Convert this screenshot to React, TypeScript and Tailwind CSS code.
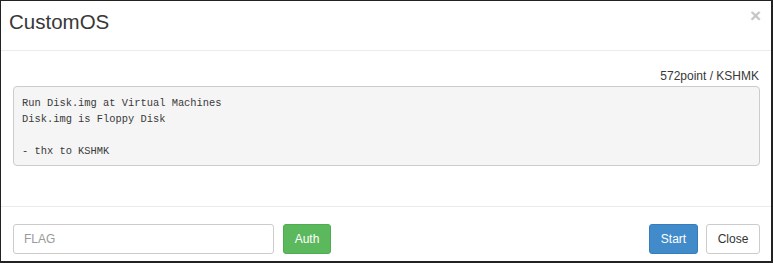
export default function App() {
  return (
    <div
      className="w-[773px] h-[263px] bg-white border-t border-l border-r-2 border-b-2 border-[#222] flex flex-col text-[#333]"
      style={{ fontFamily: '"Liberation Sans", Arial, sans-serif' }}
    >
      <div className="h-[50px] shrink-0 border-b border-[#ebebeb] flex justify-between items-start pl-[8px] pr-[10px]">
        <h4 className="text-[20.5px] leading-[28px] pt-[7px] text-[#383838]">CustomOS</h4>
        <span className="text-[19px] leading-[20px] font-bold text-[#c6c6c6] pt-[5px]">×</span>
      </div>

      <div className="flex-1 pl-[12px] pr-[11px] pt-[17px]">
        <div className="text-right text-[12px] leading-[17px] mb-[1px] pr-[1px] text-[#383838]">572point / KSHMK</div>
        <pre
          className="h-[80px] bg-[#f5f5f5] border border-[#ccc] rounded-[4px] px-[8px] pt-[8px] text-[10.4px] leading-[16px] text-[#3a3a3a]"
          style={{ fontFamily: '"Liberation Mono", "DejaVu Sans Mono", monospace' }}
        >
{`Run Disk.img at Virtual Machines
Disk.img is Floppy Disk

- thx to KSHMK`}
        </pre>
      </div>

      <div className="h-[55px] shrink-0 border-t border-[#ebebeb] flex items-start pl-[12px] pr-[11px] pt-[17px] text-[12px]">
        <input
          placeholder="FLAG"
          className="w-[261px] h-[30px] border border-[#ccc] rounded-[3px] px-[10px] text-[12px] placeholder:text-[#999] outline-none"
        />
        <button className="ml-[9px] w-[48px] h-[30px] rounded-[3px] bg-[#5cb85c] border border-[#4cae4c] text-white">
          Auth
        </button>
        <div className="flex-1" />
        <button className="w-[49px] h-[30px] rounded-[3px] bg-[#428bca] border border-[#357ebd] text-white">
          Start
        </button>
        <button className="ml-[8px] w-[54px] h-[30px] rounded-[3px] bg-white border border-[#ccc] text-[#333]">
          Close
        </button>
      </div>
    </div>
  );
}
